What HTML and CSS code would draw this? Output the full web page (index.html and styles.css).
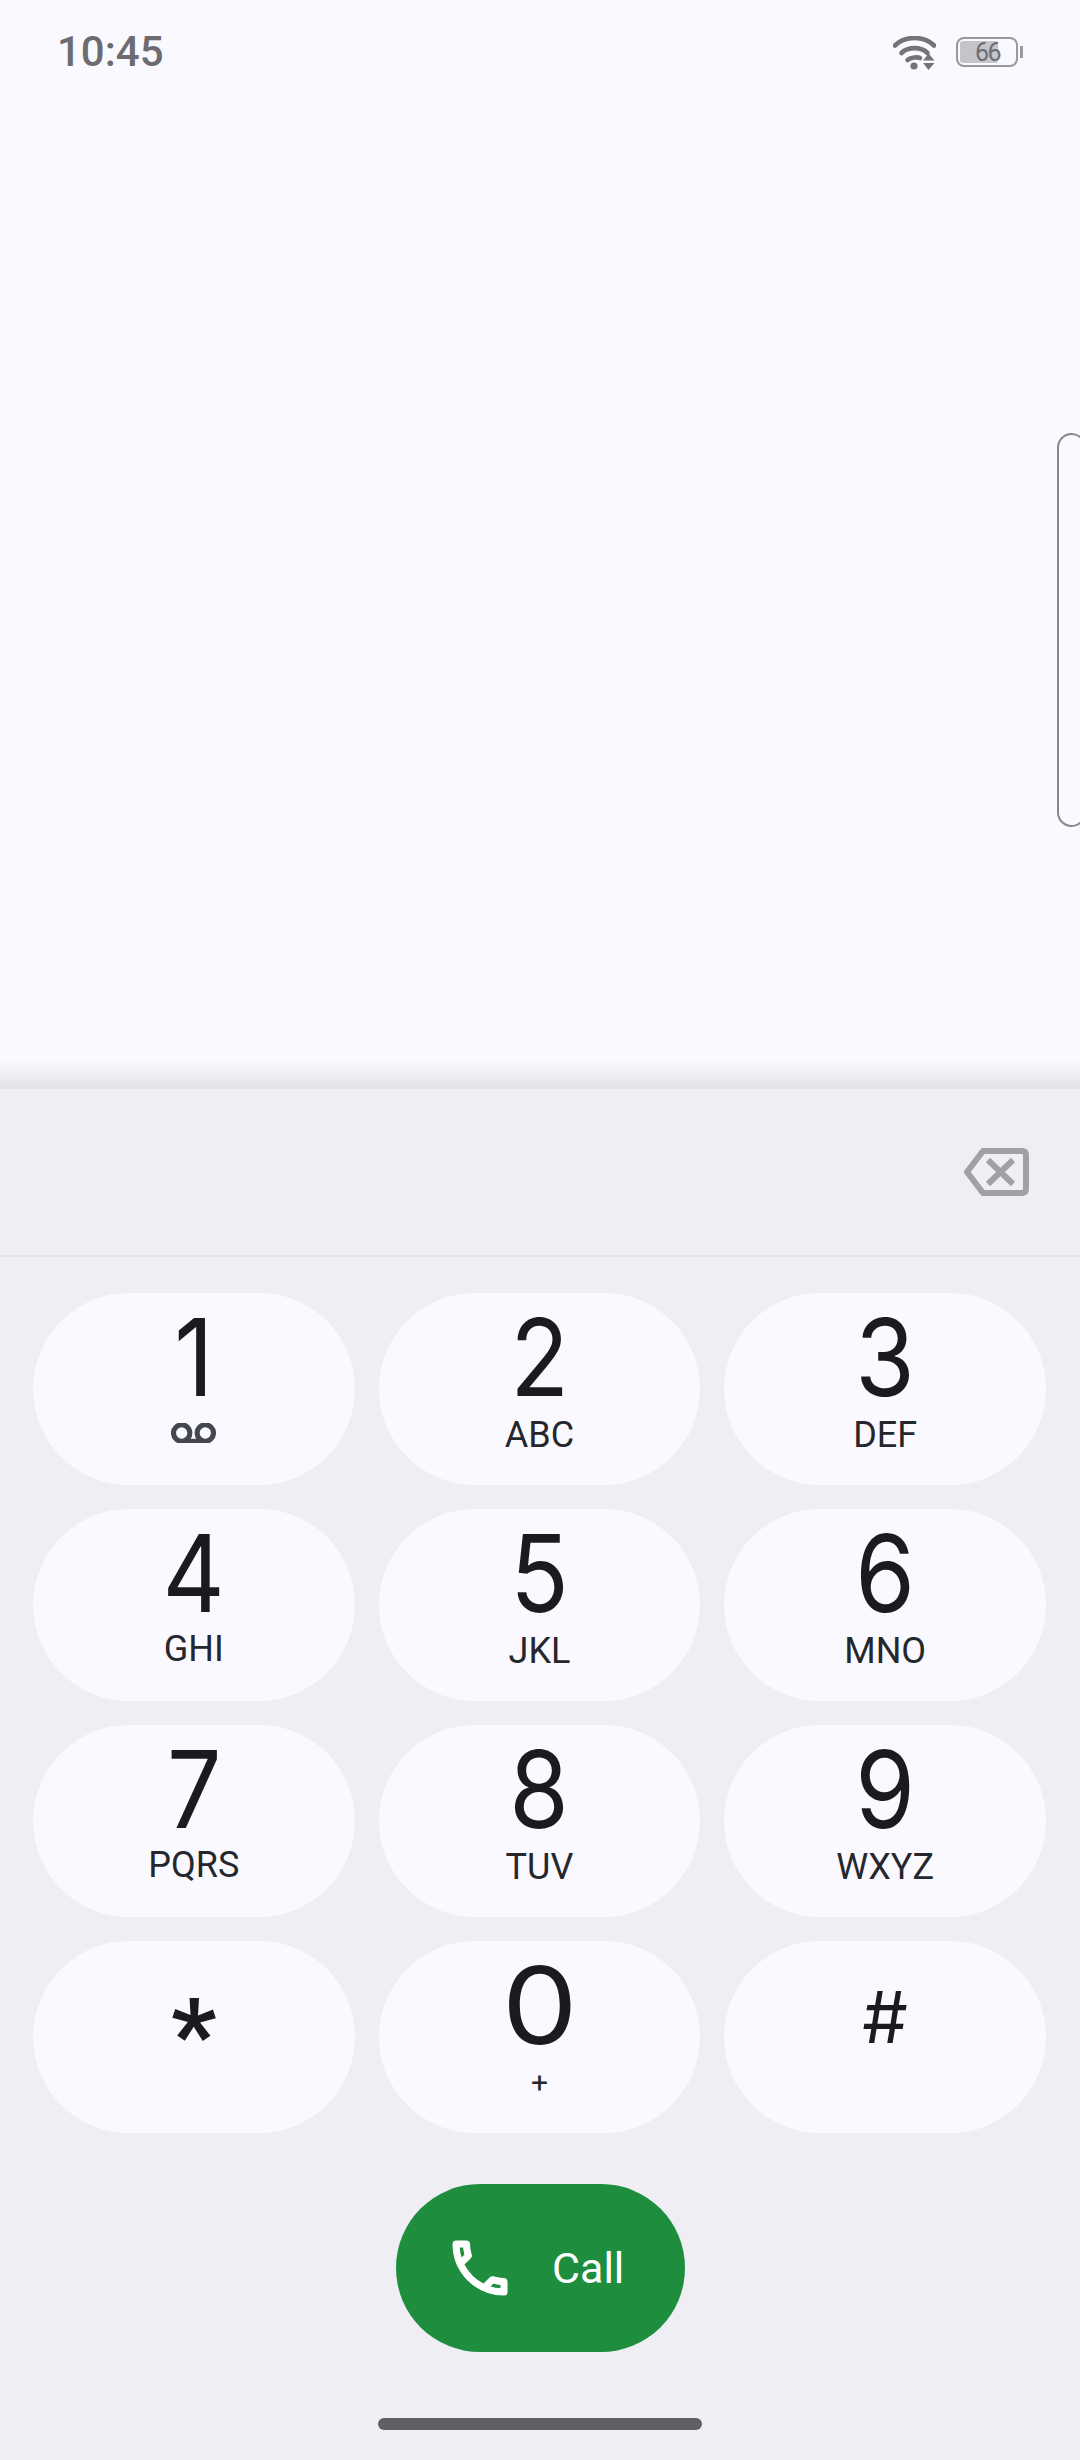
FILE: index.html
```html
<!DOCTYPE html>
<html lang="en">
<head>
<meta charset="utf-8">
<title>Phone dialer</title>
<link rel="stylesheet" href="styles.css">
</head>
<body>
<div class="screen">
  <header class="status">
    <span class="time">10:45</span>
    <div class="status-icons">
      <svg class="wifi" viewBox="0 0 43 34" aria-hidden="true">
        <path class="wifi-arc" d="M2 9.5C12 -0.5 31 -0.5 41 9.5"/>
        <path class="wifi-arc" d="M8.5 17C15 10.5 28 10.5 34.5 17"/>
        <path class="wifi-arc" d="M14.5 24C18 21 25 21 27 22"/>
        <circle class="wifi-fill" cx="21" cy="30" r="3.6"/>
        <path class="wifi-fill" d="M30 24.5L35.5 17.5L41.5 24.5Z"/>
        <path class="wifi-fill" d="M30 27L41.5 27L35.5 34Z"/>
      </svg>
      <div class="battery">
        <div class="battery-body">
          <div class="battery-fill"></div>
          <span class="battery-text">66</span>
        </div>
        <div class="battery-nub"></div>
      </div>
    </div>
  </header>
  <main class="content"></main>
  <div class="side-handle"></div>
  <div class="shade"></div>
  <section class="panel">
    <div class="display">
      <svg class="backspace" viewBox="0 0 66 48" aria-hidden="true">
        <path d="M20 3H59Q63 3 63 7V41Q63 45 59 45H20L4 24Z"/>
        <path d="M25 12L50 36M50 12L25 36"/>
      </svg>
    </div>
    <div class="keypad">
      <button class="key"><span class="digit">1</span>
        <svg class="vm" viewBox="0 6 24 11" aria-hidden="true"><path d="M18.5 6C15.46 6 13 8.46 13 11.5c0 1.33.47 2.55 1.26 3.5H9.74c.79-.95 1.26-2.17 1.26-3.5C11 8.46 8.54 6 5.5 6S0 8.46 0 11.5 2.46 17 5.5 17h13c3.04 0 5.5-2.46 5.5-5.5S21.54 6 18.5 6zm-13 9C3.57 15 2 13.43 2 11.5S3.57 8 5.5 8 9 9.57 9 11.5 7.43 15 5.5 15zm13 0c-1.93 0-3.5-1.57-3.5-3.5S16.57 8 18.5 8 22 9.57 22 11.5 20.43 15 18.5 15z"/></svg>
      </button>
      <button class="key"><span class="digit">2</span><span class="letters">ABC</span></button>
      <button class="key"><span class="digit">3</span><span class="letters">DEF</span></button>
      <button class="key"><span class="digit">4</span><span class="letters raised">GHI</span></button>
      <button class="key"><span class="digit">5</span><span class="letters">JKL</span></button>
      <button class="key"><span class="digit">6</span><span class="letters">MNO</span></button>
      <button class="key"><span class="digit">7</span><span class="letters raised">PQRS</span></button>
      <button class="key"><span class="digit">8</span><span class="letters">TUV</span></button>
      <button class="key"><span class="digit">9</span><span class="letters">WXYZ</span></button>
      <button class="key"><span class="star">*</span></button>
      <button class="key"><span class="digit zero">0</span><span class="letters plus">+</span></button>
      <button class="key"><span class="hash">#</span></button>
    </div>
    <button class="call">
      <svg class="call-icon" viewBox="0 0 24 24" aria-hidden="true"><path d="M6.54 5c.06.89.21 1.76.45 2.59l-1.2 1.2c-.41-1.2-.67-2.47-.76-3.79h1.51m9.86 12.02c.85.24 1.72.39 2.6.45v1.49c-1.32-.09-2.59-.35-3.8-.75l1.2-1.19M7.5 3H4c-.55 0-1 .45-1 1 0 9.39 7.61 17 17 17 .55 0 1-.45 1-1v-3.49c0-.55-.45-1-1-1-1.24 0-2.45-.2-3.57-.57-.1-.04-.21-.05-.31-.05-.26 0-.51.1-.71.29l-2.2 2.2c-2.83-1.45-5.15-3.76-6.59-6.59l2.2-2.2c.28-.28.36-.67.25-1.02C8.7 6.45 8.5 5.25 8.5 4c0-.55-.45-1-1-1z"/></svg>
      <span class="call-label">Call</span>
    </button>
    <div class="home-bar"></div>
  </section>
</div>
</body>
</html>
```
FILE: styles.css
```css
* { box-sizing: border-box; }
html, body { margin: 0; padding: 0; }
body { width: 1080px; height: 2460px; overflow: hidden; font-family: "Inter", "Roboto", sans-serif; }
.screen { position: relative; width: 1080px; height: 2460px; display: flex; flex-direction: column; background: #f9f9ff; }

.status { height: 104px; padding: 28px 57px 0 57px; display: flex; justify-content: space-between; align-items: flex-start; }
.time { font: 500 42px/48px "Roboto", sans-serif; color: #6b6b70; }
.status-icons { display: flex; align-items: flex-start; gap: 20px; padding-top: 8px; }
.wifi { width: 43px; height: 34px; display: block; }
.wifi-arc { fill: none; stroke: #737378; stroke-width: 4.6; stroke-linecap: round; }
.wifi-fill { fill: #737378; }
.battery { display: flex; align-items: center; gap: 2px; margin-top: 1px; }
.battery-body { position: relative; width: 62px; height: 30px; border: 2.5px solid #98989d; border-radius: 8px; display: flex; align-items: center; }
.battery-fill { position: absolute; left: 2px; top: 2px; bottom: 2px; width: 38px; background: #c4c4ca; border-radius: 3px; }
.battery-text { position: relative; margin-left: 17px; font: 400 25px/25px "Roboto", sans-serif; letter-spacing: -1.5px; color: #6c6c72; }
.battery-nub { width: 3px; height: 12px; background: #98989d; }

.content { flex: 1; }
.side-handle { position: absolute; right: -6px; top: 433px; width: 29px; height: 394px; border: 2px solid #86868c; border-radius: 24px; }
.shade { height: 29px; background: linear-gradient(#f9f9ff, #e2e2e8); }

.panel { height: 1371px; background: #eeeef4; display: flex; flex-direction: column; align-items: stretch; }
.display { height: 168px; border-bottom: 2px solid #e2e2e9; display: flex; align-items: flex-start; justify-content: flex-end; padding: 59px 51px 0 0; }
.backspace { width: 66px; height: 48px; display: block; fill: none; stroke: #a0a0a5; stroke-width: 6; stroke-linejoin: round; }

.keypad { padding: 36px 34px 0 33px; display: grid; grid-template-columns: repeat(3, 1fr); column-gap: 24px; row-gap: 24px; }
.key { height: 192px; border: 0; padding: 0; border-radius: 96px; background: #f9f9ff; display: flex; flex-direction: column; align-items: center; color: #1a1b20; font-family: inherit; }
.digit { font: 400 107px/100px "Inter", sans-serif; margin-top: 14px; height: 108px; transform: scaleX(0.9); }
.zero { transform: scaleX(1.12); }
.letters { font: 400 36px/40px "Roboto", sans-serif; color: #26272c; }
.raised { margin-top: -2px; }
.plus { font-size: 30px; margin-top: 0; }
.vm { width: 45px; height: 20px; display: block; fill: #44474f; stroke: #44474f; stroke-width: 0.8; margin-top: 8px; }
.star { font: 700 100px/100px "Roboto", sans-serif; margin-top: 44px; }
.hash { font: 400 72px/100px "Inter", sans-serif; margin-top: 26px; }

.call { align-self: center; margin: 51px 0 0 1px; width: 289px; height: 168px; border: 0; padding: 0 0 0 48px; border-radius: 84px; background: #1e8e3e; color: #fff; display: flex; align-items: center; }
.call-icon { width: 72px; height: 72px; fill: #fff; stroke: #fff; stroke-width: 0.35; flex: none; }
.call-label { margin-left: 36px; font: 400 43px/52px "Roboto", sans-serif; }

.home-bar { align-self: center; margin-top: 66px; width: 324px; height: 12px; border-radius: 6px; background: #606064; }
```
